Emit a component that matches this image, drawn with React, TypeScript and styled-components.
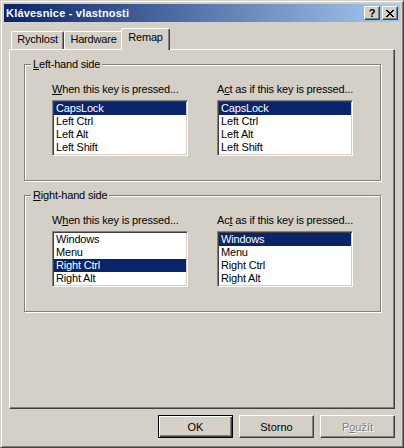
import { FC } from "react";
import styled, { createGlobalStyle } from "styled-components";

const GlobalStyle = createGlobalStyle`
  html, body {
    margin: 0;
    padding: 0;
  }

  body {
    background: #d4d0c8;
    font-family: "Liberation Sans", Arial, sans-serif;
    font-size: 11px;
    letter-spacing: -0.18px;
    color: #000;
  }
`;

type KeyList = {
    label: string;
    accessAt: number;
    items: string[];
    selected: number;
};

type Group = {
    title: string;
    lists: KeyList[];
};

const groups: Group[] = [
    {
        title: "Left-hand side",
        lists: [
            {
                label: "When this key is pressed...",
                accessAt: 0,
                items: ["CapsLock", "Left Ctrl", "Left Alt", "Left Shift"],
                selected: 0,
            },
            {
                label: "Act as if this key is pressed...",
                accessAt: 1,
                items: ["CapsLock", "Left Ctrl", "Left Alt", "Left Shift"],
                selected: 0,
            },
        ],
    },
    {
        title: "Right-hand side",
        lists: [
            {
                label: "When this key is pressed...",
                accessAt: 1,
                items: ["Windows", "Menu", "Right Ctrl", "Right Alt"],
                selected: 2,
            },
            {
                label: "Act as if this key is pressed...",
                accessAt: 2,
                items: ["Windows", "Menu", "Right Ctrl", "Right Alt"],
                selected: 0,
            },
        ],
    },
];

const tabs = [
    { name: "Rychlost", width: 53 },
    { name: "Hardware", width: 59 },
    { name: "Remap", width: 45 },
];

const Access: FC<{ text: string; at: number }> = ({ text, at }) => (
    <>
        {text.slice(0, at)}
        <Underline>{text[at]}</Underline>
        {text.slice(at + 1)}
    </>
);

export default function App() {
    const activeTab = 2;

    return (
        <>
            <GlobalStyle />
            <Window>
                <TitleBar>
                    <Caption>Klávesnice - vlastnosti</Caption>
                    <CaptionButtons>
                        <CaptionButton>?</CaptionButton>
                        <CaptionButton>
                            <svg width="8" height="7" viewBox="0 0 8 7" shapeRendering="crispEdges">
                                <path
                                    d="M0 0h2v1h-2zM6 0h2v1h-2zM1 1h2v1h-2zM5 1h2v1h-2zM2 2h4v1h-4zM3 3h2v1h-2zM2 4h4v1h-4zM1 5h2v1h-2zM5 5h2v1h-2zM0 6h2v1h-2zM6 6h2v1h-2z"
                                    fill="#000"
                                />
                            </svg>
                        </CaptionButton>
                    </CaptionButtons>
                </TitleBar>

                <Body>
                    <TabRow>
                        {tabs.map((tab, i) => (
                            <Tab key={tab.name} $active={i === activeTab} $width={tab.width}>
                                {tab.name}
                            </Tab>
                        ))}
                    </TabRow>

                    <Panel>
                        {groups.map((group) => (
                            <GroupBox key={group.title}>
                                <Legend>
                                    <Access text={group.title} at={0} />
                                </Legend>
                                {group.lists.map((list) => (
                                    <Column key={list.label}>
                                        <Label>
                                            <Access text={list.label} at={list.accessAt} />
                                        </Label>
                                        <ListBox>
                                            {list.items.map((item, i) => (
                                                <ListItem key={item} $selected={i === list.selected}>
                                                    {item}
                                                </ListItem>
                                            ))}
                                        </ListBox>
                                    </Column>
                                ))}
                            </GroupBox>
                        ))}
                    </Panel>

                    <ButtonRow>
                        <PushButton $default>OK</PushButton>
                        <PushButton>Storno</PushButton>
                        <PushButton disabled>
                            <Access text="Použít" at={1} />
                        </PushButton>
                    </ButtonRow>
                </Body>
            </Window>
        </>
    );
}

const Window = styled.div`
    width: 404px;
    height: 448px;
    box-sizing: border-box;
    display: flex;
    flex-direction: column;
    padding: 3px;
    background: #d4d0c8;
    border: 1px solid;
    border-color: #d4d0c8 #404040 #404040 #d4d0c8;
    box-shadow: inset 1px 1px 0 #fff, inset -1px -1px 0 #808080;
`;

const TitleBar = styled.div`
    height: 18px;
    display: flex;
    align-items: center;
    padding: 0 2px 0 1px;
    background: linear-gradient(to right, #0a246a, #a6caf0);
    color: #fff;
    font-weight: bold;
`;

const Caption = styled.span`
    flex: 1;
    padding-left: 1px;
    line-height: 13px;
    letter-spacing: 0.2px;
`;

const CaptionButtons = styled.div`
    display: flex;
    gap: 2px;
`;

const CaptionButton = styled.div`
    width: 16px;
    height: 14px;
    box-sizing: border-box;
    display: flex;
    align-items: center;
    justify-content: center;
    background: #d4d0c8;
    border: 1px solid;
    border-color: #fff #404040 #404040 #fff;
    box-shadow: inset -1px -1px 0 #808080;
    color: #000;
    font-size: 11px;
    font-weight: bold;
    line-height: 11px;
    letter-spacing: 0;
`;

const Body = styled.div`
    display: flex;
    flex-direction: column;
    padding: 6px 5px 0;
`;

const TabRow = styled.div`
    height: 21px;
    display: flex;
    align-items: flex-end;
    padding-left: 2px;
    position: relative;
    z-index: 1;
`;

const Tab = styled.div<{ $active?: boolean; $width: number }>`
    width: ${(p) => p.$width + (p.$active ? 4 : 0)}px;
    height: ${(p) => (p.$active ? 22 : 18)}px;
    box-sizing: border-box;
    margin: 0 ${(p) => (p.$active ? -2 : 0)}px ${(p) => (p.$active ? -1 : 0)}px;
    padding-top: ${(p) => (p.$active ? 2 : 1)}px;
    background: #d4d0c8;
    border-top: 1px solid #fff;
    border-left: 1px solid #fff;
    border-right: 1px solid #404040;
    border-radius: 2px 2px 0 0;
    box-shadow: inset -1px 0 0 #808080;
    text-align: center;
    line-height: 13px;
`;

const Panel = styled.div`
    height: 360px;
    box-sizing: border-box;
    display: flex;
    flex-direction: column;
    gap: 14px;
    padding: 14px 13px 0 14px;
    border: 1px solid;
    border-color: #fff #404040 #404040 #fff;
    box-shadow: inset -1px -1px 0 #808080;
`;

const GroupBox = styled.div`
    position: relative;
    display: grid;
    grid-template-columns: 136px 136px;
    column-gap: 29px;
    padding: 18px 0 24px 27px;
    border: 1px solid #808080;
    box-shadow: inset 1px 1px 0 #fff, 1px 1px 0 #fff;
`;

const Legend = styled.span`
    position: absolute;
    top: -7px;
    left: 6px;
    padding: 0 2px;
    background: #d4d0c8;
    line-height: 13px;
`;

const Column = styled.div`
    display: flex;
    flex-direction: column;
    gap: 4px;
`;

const Label = styled.div`
    line-height: 13px;
    white-space: nowrap;
`;

const ListBox = styled.div`
    height: 56px;
    box-sizing: border-box;
    background: #fff;
    border: 1px solid;
    border-color: #808080 #fff #fff #808080;
    box-shadow: inset 1px 1px 0 #404040, inset -1px -1px 0 #d4d0c8;
    padding: 1px;
`;

const ListItem = styled.div<{ $selected?: boolean }>`
    height: 13px;
    line-height: 12px;
    padding-left: 2px;
    background: ${(p) => (p.$selected ? "#0a246a" : "transparent")};
    color: ${(p) => (p.$selected ? "#fff" : "#000")};
    white-space: nowrap;
`;

const ButtonRow = styled.div`
    display: flex;
    justify-content: flex-end;
    gap: 6px;
    margin-top: 6px;
`;

const PushButton = styled.button<{ $default?: boolean }>`
    width: 75px;
    height: 23px;
    box-sizing: border-box;
    margin: 0;
    padding: 0;
    font: inherit;
    color: #000;
    background: #d4d0c8;
    border: 1px solid;
    border-color: ${(p) => (p.$default ? "#000" : "#fff #404040 #404040 #fff")};
    box-shadow: ${(p) =>
        p.$default
            ? "inset 1px 1px 0 #fff, inset -1px -1px 0 #404040, inset -2px -2px 0 #808080"
            : "inset -1px -1px 0 #808080"};

    &:disabled {
        color: #808080;
        text-shadow: 1px 1px 0 #fff;
    }
`;

const Underline = styled.span`
    text-decoration: underline;
`;
